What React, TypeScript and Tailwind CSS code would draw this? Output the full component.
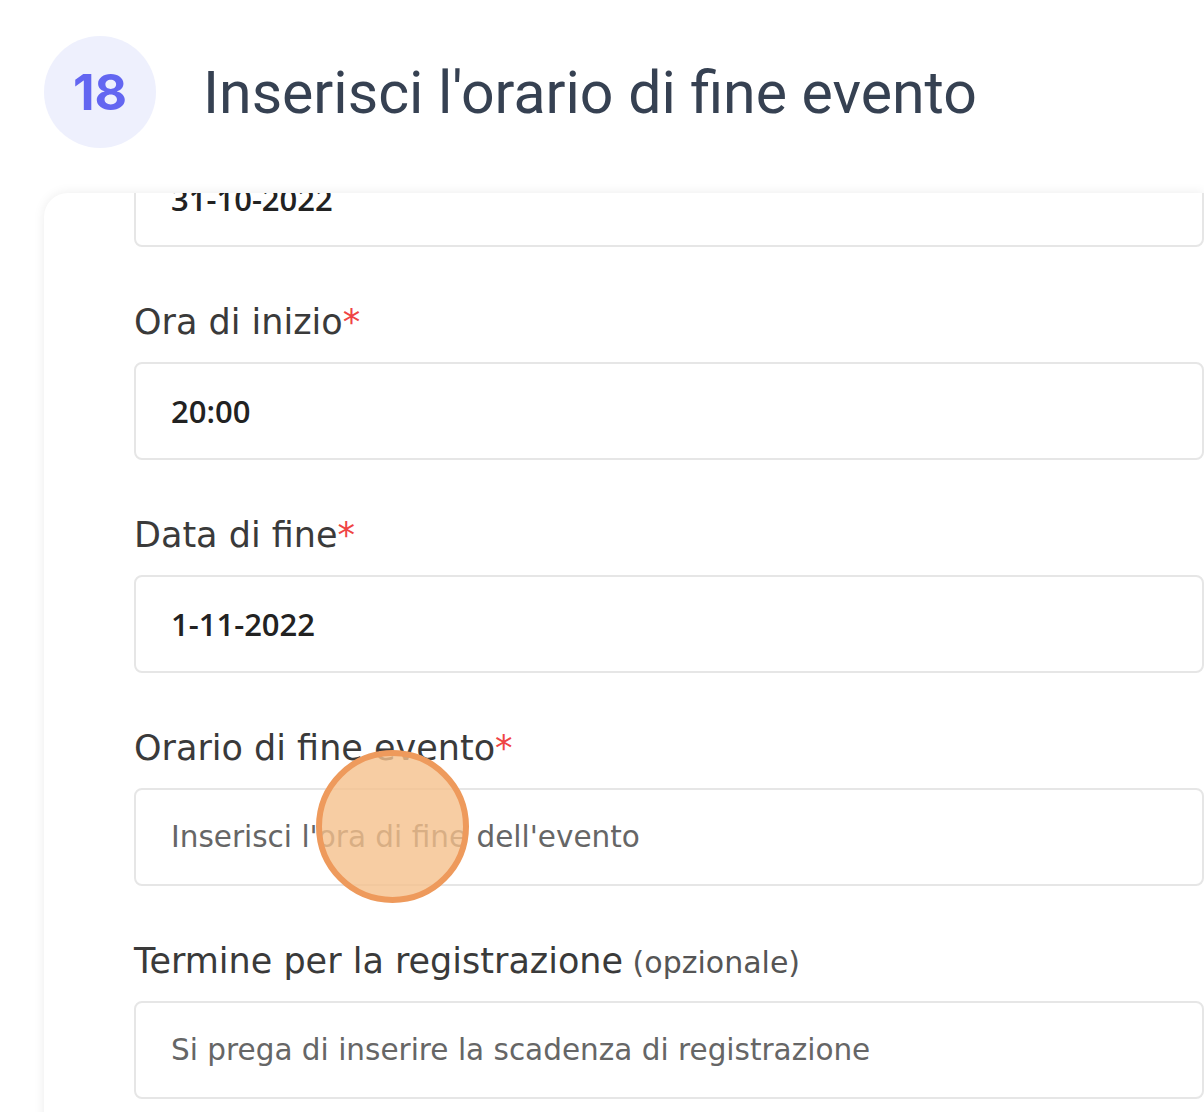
export default function App() {
  const fields = [
    { label: "Ora di inizio", required: true, value: "20:00" },
    { label: "Data di fine", required: true, value: "1-11-2022" },
    {
      label: "Orario di fine evento",
      required: true,
      placeholder: "Inserisci l'ora di fine dell'evento",
      tap: true,
    },
    {
      label: "Termine per la registrazione",
      optional: true,
      placeholder: "Si prega di inserire la scadenza di registrazione",
    },
  ];

  return (
    <div className="h-[1112px] w-[1204px] overflow-hidden bg-white">
      <div className="flex items-center gap-[47px] pl-[44px] pt-[36px]">
        <div className="flex h-[112px] w-[112px] items-center justify-center rounded-full bg-[#eef0fd]">
          <span className="font-['Inter',sans-serif] text-[50px] font-bold text-[#6366f1]">18</span>
        </div>
        <h1 className="font-['Roboto',sans-serif] text-[59px] font-normal leading-none text-[#364152]">
          Inserisci l'orario di fine evento
        </h1>
      </div>

      <div className="ml-[44px] mt-[45px] h-[1000px] overflow-hidden rounded-tl-[24px] bg-white shadow-[0_0_12px_rgba(0,0,0,0.08)]">
        <div className="-mt-[44px] pl-[90px] font-['DejaVu_Sans',sans-serif]">
          <div className="flex h-[98px] items-center rounded-[8px] border-2 border-[#e6e6e6] pl-[35px] pt-[3px] font-['Open_Sans',sans-serif] text-[31px] font-semibold text-[#222]">
            31-10-2022
          </div>
          {fields.map((f) => (
            <div key={f.label} className="pt-[55px]">
              <label className="block h-[60px] text-[35px] leading-[40px] text-[#3a3a3a]">
                {f.label}
                {f.required && <span className="text-[#ef4444]">*</span>}
                {f.optional && <span className="text-[30px] text-[#555]"> (opzionale)</span>}
              </label>
              <div className="relative flex h-[98px] items-center rounded-[8px] border-2 border-[#e6e6e6] pl-[35px]">
                {f.value ? (
                  <span className="font-['Open_Sans',sans-serif] text-[31px] font-semibold text-[#222]">{f.value}</span>
                ) : (
                  <span className="text-[29.5px] text-[#666]">{f.placeholder}</span>
                )}
                {f.tap && (
                  <span className="absolute left-[180px] top-[-40px] h-[153px] w-[153px] rounded-full border-[6px] border-[#ee9a5c] bg-[#f5c08c]/80" />
                )}
              </div>
            </div>
          ))}
        </div>
      </div>
    </div>
  );
}
